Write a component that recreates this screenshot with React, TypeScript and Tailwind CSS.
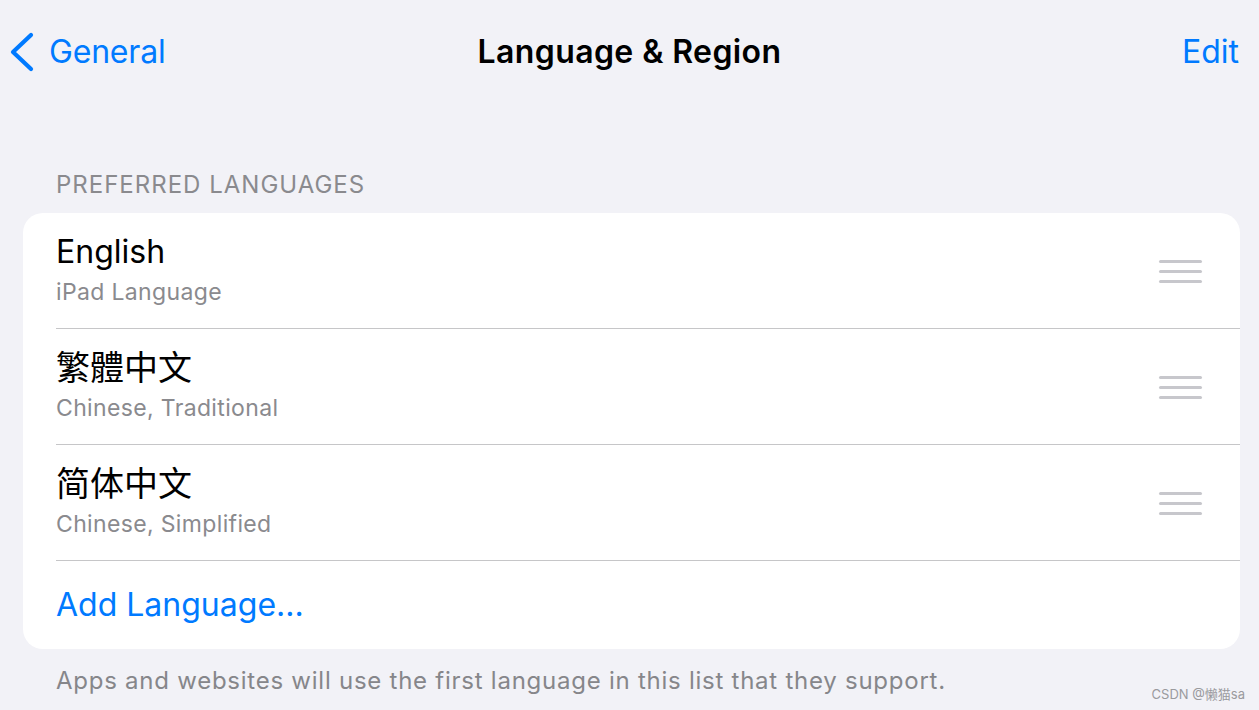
import React from "react";

const rows = [
  { title: "English", sub: "iPad Language", font: "font-['Inter','Noto_Sans_CJK_SC',sans-serif]", size: "text-[32px]" },
  { title: "繁體中文", sub: "Chinese, Traditional", font: "font-['Inter','Noto_Sans_CJK_TC',sans-serif]", size: "text-[34px]" },
  { title: "简体中文", sub: "Chinese, Simplified", font: "font-['Inter','Noto_Sans_CJK_SC',sans-serif]", size: "text-[34px]" },
];

function Handle() {
  return (
    <div className="mt-[2px] flex flex-col gap-[7px]">
      <div className="h-[3px] w-[43px] rounded-full bg-[#c7c7cc]" />
      <div className="h-[3px] w-[43px] rounded-full bg-[#c7c7cc]" />
      <div className="h-[3px] w-[43px] rounded-full bg-[#c7c7cc]" />
    </div>
  );
}

export default function App() {
  return (
    <div className="relative h-[710px] w-full overflow-hidden bg-[#f2f2f7] font-['Inter','Noto_Sans_CJK_SC',sans-serif] text-black">
      <header className="relative flex h-[104px] items-center justify-between pl-[9px] pr-[20px]">
        <div className="flex items-center gap-[14px] text-[#007aff]">
          <svg width="26" height="40" viewBox="0 0 26 40" fill="none">
            <path d="M22 3 L4 20 L22 37" stroke="#007aff" strokeWidth="4.2" strokeLinecap="round" strokeLinejoin="round" />
          </svg>
          <span className="text-[32px] leading-[40px] tracking-[-0.2px]">General</span>
        </div>
        <h1 className="absolute left-1/2 -translate-x-1/2 text-[32px] font-semibold leading-[40px] tracking-[0.4px]">
          Language &amp; Region
        </h1>
        <span className="text-[32px] leading-[40px] text-[#007aff]">Edit</span>
      </header>

      <div className="mt-[67px] mb-[14px] pl-[56px] text-[24px] leading-[28px] tracking-[1px] text-[#8a8a8e]">
        PREFERRED LANGUAGES
      </div>

      <div className="ml-[23px] mr-[19px] overflow-hidden rounded-[20px] bg-white">
        {rows.map((r) => (
          <div key={r.title} className="pl-[33px]">
            <div className="flex h-[115px] items-center justify-between pr-[38px]">
              <div className={`flex flex-col ${r.font}`}>
                <span className={`${r.size} leading-[40px]`}>{r.title}</span>
                <span className="mt-[2px] text-[23px] leading-[36px] tracking-[0.35px] text-[#8a8a8e]">{r.sub}</span>
              </div>
              <Handle />
            </div>
            <div className="h-px bg-[#c6c6c8]" />
          </div>
        ))}
        <div className="flex h-[88px] items-center pl-[33px] text-[32px] leading-[40px] text-[#007aff]">
          Add Language...
        </div>
      </div>

      <div className="mt-[17px] pl-[56px] text-[24px] leading-[30px] tracking-[0.75px] text-[#86868a]">
        Apps and websites will use the first language in this list that they support.
      </div>

      <div className="absolute bottom-[8px] right-[14px] text-[13px] leading-[16px] text-[#9a9a9e]">
        CSDN @懒猫sa
      </div>
    </div>
  );
}
